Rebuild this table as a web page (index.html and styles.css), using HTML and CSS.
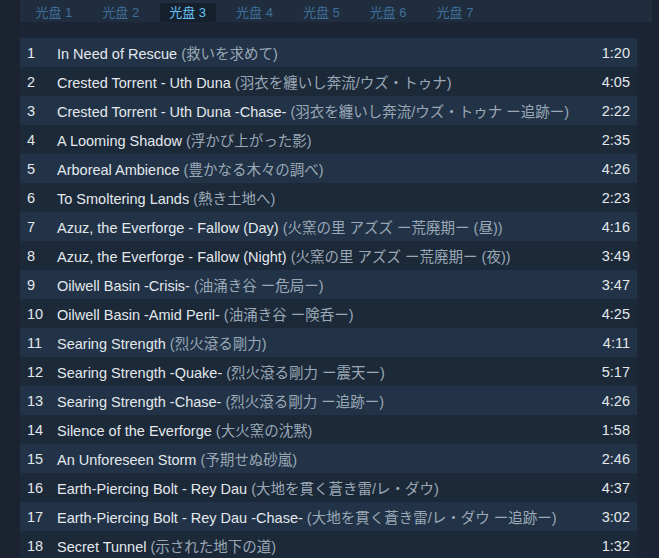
FILE: index.html
```html
<!DOCTYPE html>
<html>
<head>
<meta charset="utf-8">
<link rel="stylesheet" href="styles.css">
</head>
<body>
<div class="page">
  <div class="side"></div>
  <div class="main">
    <div class="tabs">
      <div class="tab">光盘 1</div>
      <div class="tab">光盘 2</div>
      <div class="tab active">光盘 3</div>
      <div class="tab">光盘 4</div>
      <div class="tab">光盘 5</div>
      <div class="tab">光盘 6</div>
      <div class="tab">光盘 7</div>
    </div>
    <div class="tracks">
      <div class="row"><span class="num">1</span><span class="title">In Need of Rescue <span class="jp">(救いを求めて)</span></span><span class="dur">1:20</span></div>
      <div class="row"><span class="num">2</span><span class="title">Crested Torrent - Uth Duna <span class="jp">(羽衣を纏いし奔流/ウズ・トゥナ)</span></span><span class="dur">4:05</span></div>
      <div class="row"><span class="num">3</span><span class="title">Crested Torrent - Uth Duna -Chase- <span class="jp">(羽衣を纏いし奔流/ウズ・トゥナ ー追跡ー)</span></span><span class="dur">2:22</span></div>
      <div class="row"><span class="num">4</span><span class="title">A Looming Shadow <span class="jp">(浮かび上がった影)</span></span><span class="dur">2:35</span></div>
      <div class="row"><span class="num">5</span><span class="title">Arboreal Ambience <span class="jp">(豊かなる木々の調べ)</span></span><span class="dur">4:26</span></div>
      <div class="row"><span class="num">6</span><span class="title">To Smoltering Lands <span class="jp">(熱き土地へ)</span></span><span class="dur">2:23</span></div>
      <div class="row"><span class="num">7</span><span class="title">Azuz, the Everforge - Fallow (Day) <span class="jp">(火窯の里 アズズ ー荒廃期ー (昼))</span></span><span class="dur">4:16</span></div>
      <div class="row"><span class="num">8</span><span class="title">Azuz, the Everforge - Fallow (Night) <span class="jp">(火窯の里 アズズ ー荒廃期ー (夜))</span></span><span class="dur">3:49</span></div>
      <div class="row"><span class="num">9</span><span class="title">Oilwell Basin -Crisis- <span class="jp">(油涌き谷 ー危局ー)</span></span><span class="dur">3:47</span></div>
      <div class="row"><span class="num">10</span><span class="title">Oilwell Basin -Amid Peril- <span class="jp">(油涌き谷 ー険呑ー)</span></span><span class="dur">4:25</span></div>
      <div class="row"><span class="num">11</span><span class="title">Searing Strength <span class="jp">(烈火滾る剛力)</span></span><span class="dur">4:11</span></div>
      <div class="row"><span class="num">12</span><span class="title">Searing Strength -Quake- <span class="jp">(烈火滾る剛力 ー震天ー)</span></span><span class="dur">5:17</span></div>
      <div class="row"><span class="num">13</span><span class="title">Searing Strength -Chase- <span class="jp">(烈火滾る剛力 ー追跡ー)</span></span><span class="dur">4:26</span></div>
      <div class="row"><span class="num">14</span><span class="title">Silence of the Everforge <span class="jp">(大火窯の沈黙)</span></span><span class="dur">1:58</span></div>
      <div class="row"><span class="num">15</span><span class="title">An Unforeseen Storm <span class="jp">(予期せぬ砂嵐)</span></span><span class="dur">2:46</span></div>
      <div class="row"><span class="num">16</span><span class="title">Earth-Piercing Bolt - Rey Dau <span class="jp">(大地を貫く蒼き雷/レ・ダウ)</span></span><span class="dur">4:37</span></div>
      <div class="row"><span class="num">17</span><span class="title">Earth-Piercing Bolt - Rey Dau -Chase- <span class="jp">(大地を貫く蒼き雷/レ・ダウ ー追跡ー)</span></span><span class="dur">3:02</span></div>
      <div class="row"><span class="num">18</span><span class="title">Secret Tunnel <span class="jp">(示された地下の道)</span></span><span class="dur">1:32</span></div>
    </div>
  </div>
</div>
</body>
</html>
```

FILE: styles.css
```css
html, body {
  margin: 0;
  padding: 0;
  background: #1b2433;
  overflow: hidden;
}
body {
  font-family: "Liberation Sans", Arial, "Noto Sans CJK JP", sans-serif;
}
.page {
  display: flex;
  height: 558px;
}
.side {
  width: 20px;
  flex: none;
  background: #1b2230;
}
.main {
  flex: none;
  width: 632px;
  background: #1b2535;
}
.tabs {
  display: flex;
  height: 22px;
  background: #1f2d3f;
  padding-left: 6px;
  gap: 11px;
  align-items: flex-end;
}
.tab {
  height: 19px;
  line-height: 19px;
  padding: 0 9.5px;
  font-size: 13px;
  color: #3f6f98;
  font-family: "Liberation Sans", Arial, "Noto Sans CJK SC", sans-serif;
}
.tab.active {
  background: #16202d;
  color: #67c1f5;
}
.tracks {
  margin-top: 16px;
  width: 617px;
}
.row {
  display: flex;
  height: 29px;
  align-items: center;
  font-size: 14.5px;
  color: #e3e8ec;
  background: #1c2939;
}
.row:nth-child(odd) {
  background: #223347;
}
.num {
  width: 30px;
  padding-left: 7px;
  flex: none;
}
.title {
  flex: 1;
  white-space: nowrap;
}
.jp {
  color: #9aa8b6;
}
.dur {
  padding-right: 7px;
  flex: none;
}
```
